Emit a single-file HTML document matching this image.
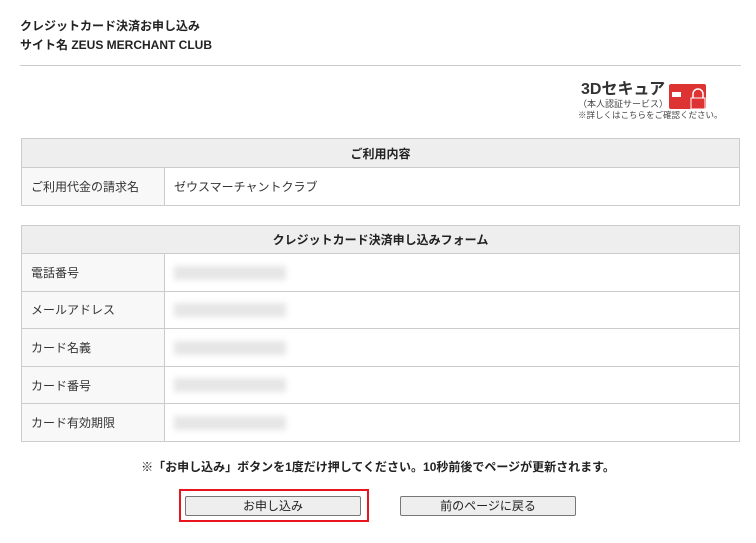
<!DOCTYPE html>
<html><head><meta charset="utf-8"><style>
body{margin:0;width:756px;height:543px;background:#fff;font-family:"Liberation Sans","Noto Sans CJK JP",sans-serif;color:#333;font-size:12px;position:relative;overflow:hidden}
.a{position:absolute;line-height:1}
.t{position:absolute;left:21px;width:719px;border:1px solid #ccc;border-collapse:collapse}
.t td{border:1px solid #ccc;padding:0 0 0 9px;font-size:12px}
.t th{background:#eee;border:1px solid #ccc;font-weight:bold;font-size:12px;color:#222}
.l{background:#f8f8f8;width:133px}
.b{display:inline-block;width:112px;height:14px;background:#e6e6e6;filter:blur(3px);vertical-align:middle}
.btn{position:absolute;top:496px;height:18px;border:1px solid #777;background:#eee;border-radius:2px;font-size:12px;text-align:center;line-height:18px;color:#222}
</style></head><body>
<div class="a" style="left:20px;top:17px;font-weight:bold;font-size:12px;line-height:19px;color:#222">クレジットカード決済お申し込み<br>サイト名 ZEUS MERCHANT CLUB</div>
<div class="a" style="left:20px;top:65px;width:721px;height:1px;background:#ccc"></div>
<div class="a" style="left:581px;top:82px;font-weight:bold;font-size:16px;color:#333">3Dセキュア</div>
<div class="a" style="left:578px;top:100px;font-size:9px;color:#444">（本人認証サービス）</div>
<div class="a" style="left:578px;top:111px;font-size:8.5px;color:#444">※詳しくはこちらをご確認ください。</div>
<svg class="a" style="left:669px;top:84px" width="38" height="26"><rect x="0" y="0" width="37" height="25" rx="2" fill="#d33"/><rect x="3" y="8" width="9" height="5" fill="#fff"/><path d="M24 14v-4a5 5 0 0 1 10 0v4" stroke="#fff" stroke-width="1.5" fill="none"/><rect x="22" y="14" width="14" height="11" fill="#d33" stroke="#fff"/></svg>
<table class="t" style="top:138px;height:68px"><tr style="height:29px"><th colspan="2">ご利用内容</th></tr><tr><td class="l">ご利用代金の請求名</td><td>ゼウスマーチャントクラブ</td></tr></table>
<table class="t" style="top:225px;height:217px"><tr style="height:28px"><th colspan="2">クレジットカード決済申し込みフォーム</th></tr>
<tr><td class="l">電話番号</td><td><span class="b"></span></td></tr>
<tr><td class="l">メールアドレス</td><td><span class="b"></span></td></tr>
<tr><td class="l">カード名義</td><td><span class="b"></span></td></tr>
<tr><td class="l">カード番号</td><td><span class="b"></span></td></tr>
<tr><td class="l">カード有効期限</td><td><span class="b"></span></td></tr></table>
<div class="a" style="left:0;width:756px;top:461px;text-align:center;font-weight:bold;font-size:12px;color:#222">※「お申し込み」ボタンを1度だけ押してください。10秒前後でページが更新されます。</div>
<div class="a" style="left:179px;top:489px;width:186px;height:29px;border:2px solid #e8141e"></div>
<div class="btn" style="left:185px;width:174px">お申し込み</div>
<div class="btn" style="left:400px;width:174px">前のページに戻る</div>
</body></html>
